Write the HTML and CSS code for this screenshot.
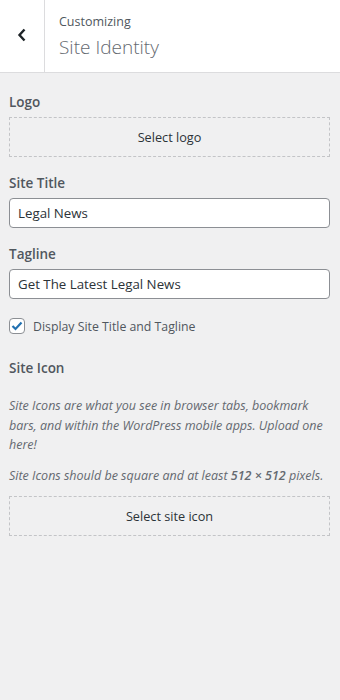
FILE: index.html
```html
<!DOCTYPE html>
<html>
<head>
    <title>Site Identity</title>
    <link rel="stylesheet" href="styles.css">
</head>
<body>
    <div class="panel-header">
        <button class="back-btn" aria-label="Back">
            <svg width="10" height="14" viewBox="0 0 10 14">
                <path d="M7.5 1.5 L2.5 7 L7.5 12.5" fill="none" stroke="#1d2327" stroke-width="2.4"/>
            </svg>
        </button>
        <div class="panel-title">
            <span class="crumb">Customizing</span>
            <h3>Site Identity</h3>
        </div>
    </div>

    <div class="controls">
        <div class="control">
            <span class="label">Logo</span>
            <button class="upload-btn">Select logo</button>
        </div>

        <div class="control">
            <label class="label" for="blogname">Site Title</label>
            <input type="text" id="blogname" value="Legal News">
        </div>

        <div class="control">
            <label class="label" for="tagline">Tagline</label>
            <input type="text" id="tagline" value="Get The Latest Legal News">
        </div>

        <div class="control check-row">
            <span class="checkbox">
                <svg width="12" height="10" viewBox="0 0 12 10">
                    <path d="M1.5 5 L4.5 8 L10.5 1.5" fill="none" stroke="#2271b1" stroke-width="2.2"/>
                </svg>
            </span>
            <span>Display Site Title and Tagline</span>
        </div>

        <div class="control">
            <span class="label">Site Icon</span>
            <p class="description first">Site Icons are what you see in browser tabs, bookmark bars, and within the WordPress mobile apps. Upload one here!</p>
            <p class="description">Site Icons should be square and at least <strong>512 × 512</strong> pixels.</p>
            <button class="upload-btn">Select site icon</button>
        </div>
    </div>
</body>
</html>
```

FILE: styles.css
```css
body {
    margin: 0;
    font-family: "Open Sans", "Noto Sans", sans-serif;
    font-size: 13px;
    color: #3c434a;
    background-color: #f0f0f1;
    height: 700px;
}
.panel-header {
    display: flex;
    height: 72px;
    background-color: #fff;
    border-bottom: 1px solid #dcdcde;
}
.back-btn {
    width: 45px;
    border: none;
    border-right: 1px solid #dcdcde;
    background: #fff;
    padding: 0 0 2px 0;
    display: flex;
    align-items: center;
    justify-content: center;
}
.panel-title {
    padding: 12px 14px 11px;
}
.crumb {
    display: block;
    font-size: 12.5px;
    color: #50575e;
    line-height: 20px;
}
.panel-title h3 {
    margin: 3px 0 0;
    font-size: 19px;
    font-weight: 300;
    color: #646970;
    line-height: 24px;
}
.controls {
    padding: 19px 10px 0 9px;
}
.control {
    margin-bottom: 16px;
}
.label {
    display: block;
    font-size: 13.5px;
    font-weight: 600;
    color: #50575e;
    line-height: 20px;
    margin-bottom: 5px;
}
.upload-btn {
    display: block;
    width: 100%;
    height: 40px;
    border: 1px dashed #c3c4c7;
    background: transparent;
    font-family: inherit;
    font-size: 12.7px;
    color: #2c3338;
    border-radius: 0;
}
input[type="text"] {
    box-sizing: border-box;
    width: 100%;
    height: 30px;
    padding: 0 8px;
    border: 1px solid #8c8f94;
    border-radius: 4px;
    background: #fff;
    font-family: inherit;
    font-size: 13.3px;
    color: #2c3338;
}
.check-row {
    display: flex;
    align-items: center;
    gap: 8px;
    height: 16px;
    margin: 19px 0 24px;
    font-size: 12.3px;
    color: #50575e;
}
.checkbox {
    box-sizing: border-box;
    width: 16px;
    height: 16px;
    border: 1px solid #8c8f94;
    border-radius: 4px;
    background: #fff;
    display: flex;
    align-items: center;
    justify-content: center;
}
.description {
    margin: 0 0 11px;
    font-style: italic;
    font-size: 12.5px;
    line-height: 19.5px;
    color: #646970;
}
.description.first {
    margin-top: 18px;
}
.description strong {
    font-weight: 600;
}
```
